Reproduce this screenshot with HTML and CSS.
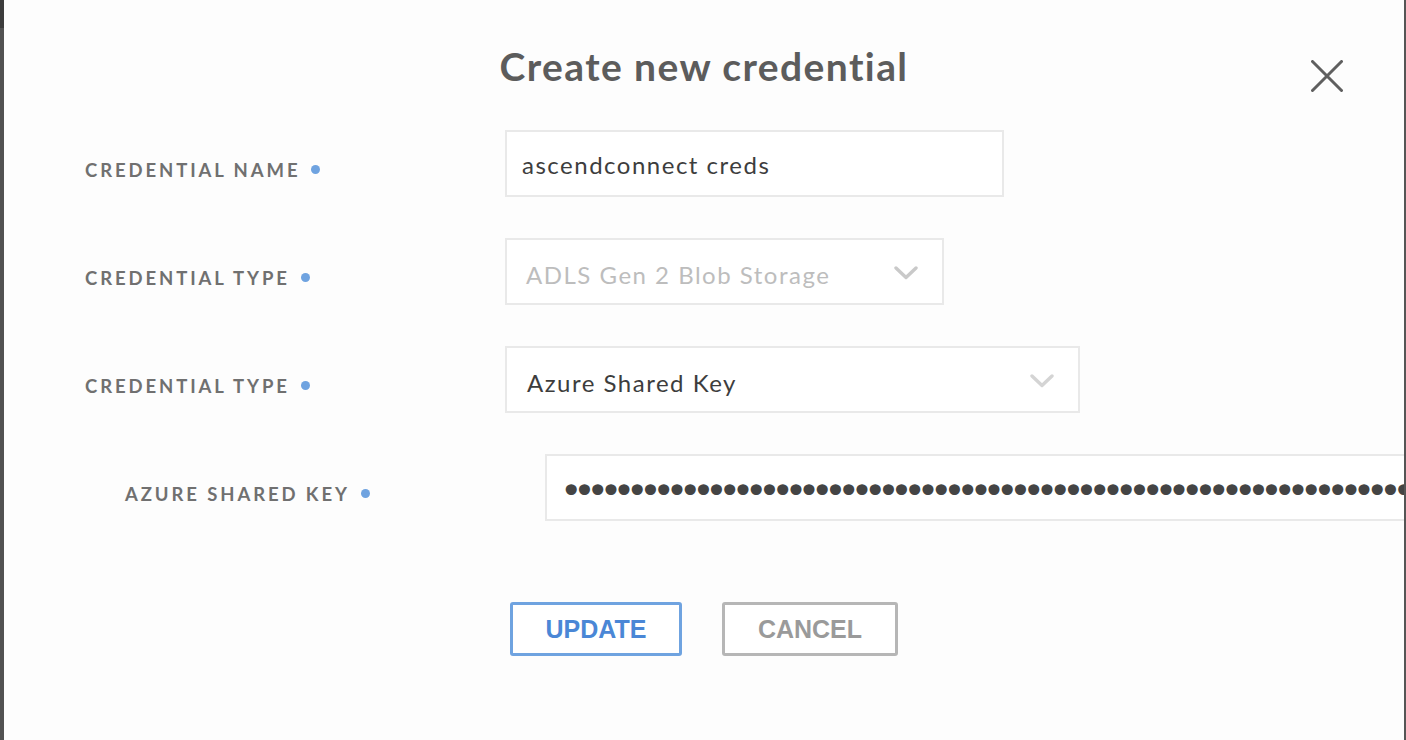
FILE: index.html
```html
<!DOCTYPE html>
<html>
<head>
<meta charset="utf-8">
<link rel="stylesheet" href="styles.css">
</head>
<body>
<div class="shade shade-left"></div>
<div class="modal">
  <h1 class="title">Create new credential</h1>
  <button class="close" aria-label="Close">
    <svg width="32" height="32" viewBox="0 0 32 32"><path d="M1.5 1.5 L30.5 30.5 M30.5 1.5 L1.5 30.5" stroke="#5f5f5f" stroke-width="3" stroke-linecap="round" fill="none"/></svg>
  </button>
  <div class="form">
    <div class="row">
      <div class="label">CREDENTIAL NAME<span class="req"></span></div>
      <div class="field field-name"><span class="value">ascendconnect creds</span></div>
    </div>
    <div class="row">
      <div class="label">CREDENTIAL TYPE<span class="req"></span></div>
      <div class="field field-type1 disabled"><span class="value">ADLS Gen 2 Blob Storage</span>
        <svg class="chev" width="24" height="14" viewBox="0 0 24 14"><path d="M2 2 L12 11.5 L22 2" stroke="#c9c9c9" stroke-width="3.4" stroke-linecap="round" stroke-linejoin="round" fill="none"/></svg>
      </div>
    </div>
    <div class="row">
      <div class="label">CREDENTIAL TYPE<span class="req"></span></div>
      <div class="field field-type2"><span class="value">Azure Shared Key</span>
        <svg class="chev" width="24" height="14" viewBox="0 0 24 14"><path d="M2 2 L12 11.5 L22 2" stroke="#d4d4d4" stroke-width="3.4" stroke-linecap="round" stroke-linejoin="round" fill="none"/></svg>
      </div>
    </div>
    <div class="row row-sub">
      <div class="label">AZURE SHARED KEY<span class="req"></span></div>
      <div class="field field-key"><span class="dots">•••••••••••••••••••••••••••••••••••••••••••••••••••••••••••••••••</span></div>
    </div>
  </div>
  <div class="actions">
    <button class="btn btn-primary">UPDATE</button>
    <button class="btn btn-secondary">CANCEL</button>
  </div>
</div>
<div class="shade shade-right"></div>
</body>
</html>
```
FILE: styles.css
```css
html, body {
  margin: 0;
  padding: 0;
  height: 100%;
}
body {
  display: flex;
  width: 1406px;
  height: 740px;
  overflow: hidden;
  background: #fdfdfd;
  font-family: Lato, "Open Sans", sans-serif;
}
.shade {
  flex: none;
  background: #525252;
}
.shade-left {
  width: 4px;
  background: linear-gradient(to bottom, #3c3c3c 0, #3c3c3c 28px, #525252 28px);
}
.shade-right {
  width: 2px;
  background: #555;
}
.modal {
  flex: 1;
  position: relative;
  overflow: hidden;
  background: #fdfdfd;
  padding: 43px 0 0 81px;
  box-sizing: border-box;
}
.title {
  margin: 0 0 41px -81px;
  text-align: center;
  font-size: 39px;
  line-height: 46px;
  font-weight: 700;
  color: #5c5c5c;
  letter-spacing: 1.4px;
}
.close {
  position: absolute;
  top: 60px;
  left: 1307px;
  width: 32px;
  height: 32px;
  padding: 0;
  border: 0;
  background: none;
}
.close svg { display: block; }
.form {
  display: flex;
  flex-direction: column;
  gap: 41px;
}
.row {
  display: flex;
  align-items: center;
  height: 67px;
}
.row-sub {
  padding-left: 40px;
}
.label {
  width: 420px;
  flex: none;
  display: flex;
  align-items: center;
  margin-top: 12px;
  font-size: 18.5px;
  font-weight: 700;
  color: #707070;
  letter-spacing: 2.9px;
}
.req {
  width: 9px;
  height: 9px;
  border-radius: 50%;
  background: #6fa3e0;
  margin-left: 11px;
}
.field {
  flex: none;
  height: 67px;
  box-sizing: border-box;
  border: 2px solid #e9e9e9;
  background: #fff;
  display: flex;
  align-items: center;
  padding: 0 24px 0 15px;
  font-size: 24px;
  letter-spacing: 1.5px;
  color: #3d3d3d;
}
.field-name { width: 499px; }
.field-type1 { width: 439px; justify-content: space-between; padding-left: 19px; }
.field-type2 { width: 575px; justify-content: space-between; padding-left: 20px; }
.field-key { width: 900px; padding-left: 13px; overflow: hidden; }
.disabled { color: #bdbdbd; }
.value { white-space: nowrap; padding-top: 1px; }
.field-type1 .value, .field-type2 .value { padding-top: 6px; }
.chev { display: block; margin-top: 2px; }
.dots {
  white-space: nowrap;
  font-family: "DejaVu Sans", sans-serif;
  font-size: 38px;
  line-height: 40px;
  padding-top: 7px;
  letter-spacing: -9.2px;
  color: #444;
}
.actions {
  display: flex;
  justify-content: center;
  gap: 40px;
  margin: 81px 0 0 -81px;
}
.btn {
  height: 54px;
  box-sizing: border-box;
  border-radius: 3px;
  background: #fff;
  font-family: "Liberation Sans", Arial, sans-serif;
  font-weight: 700;
  font-size: 25px;
  padding: 0;
}
.btn-primary {
  width: 172px;
  border: 3px solid #6fa3e0;
  color: #4a87d6;
}
.btn-secondary {
  width: 176px;
  border: 3px solid #b6b6b6;
  color: #9a9a9a;
}
```
